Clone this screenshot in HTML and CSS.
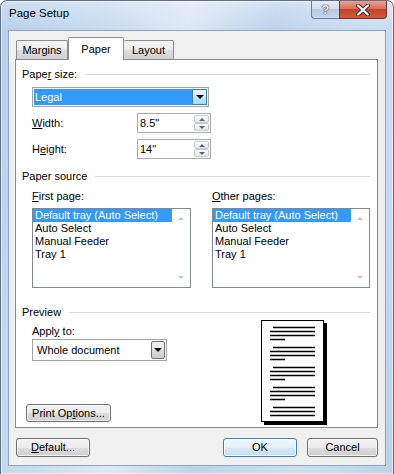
FILE: index.html
```html
<!DOCTYPE html>
<html lang="en">
<head>
  <meta charset="UTF-8" />
  <title>Page Setup</title>
  <link rel="stylesheet" href="styles.css">
</head>
<body>

  <div class="window">
    <div class="titlebar">
      <span class="title">Page Setup</span>
      <div class="caption-buttons">
        <span class="cap-btn help">?</span>
        <span class="cap-btn close">
          <svg width="16" height="12" viewBox="0 0 16 12">
            <path d="M3 1.5 L13 10.5 M13 1.5 L3 10.5" stroke="#3a2a28" stroke-width="4" stroke-linecap="round" />
            <path d="M3 1.5 L13 10.5 M13 1.5 L3 10.5" stroke="#fff" stroke-width="2.2" stroke-linecap="round" />
          </svg>
        </span>
      </div>
    </div>

    <div class="client">
      <div class="tabs">
        <span class="tab tab-margins">Margins</span>
        <span class="tab tab-paper active">Paper</span>
        <span class="tab tab-layout">Layout</span>
      </div>

      <div class="panel">
        <div class="group-title"><span>Pape<u>r</u> size:</span></div>
        <div class="combo combo-legal">
          <span class="combo-text selected">Legal</span>
          <span class="drop drop-focus"></span>
        </div>

        <div class="field-row">
          <label><u>W</u>idth:</label>
          <div class="spin">
            <span class="spin-text">8.5"</span>
            <span class="spin-btns"><span class="sb up"></span><span class="sb down"></span></span>
          </div>
        </div>
        <div class="field-row">
          <label>H<u>e</u>ight:</label>
          <div class="spin">
            <span class="spin-text">14"</span>
            <span class="spin-btns"><span class="sb up"></span><span class="sb down"></span></span>
          </div>
        </div>

        <div class="group-title gap-source"><span>Paper source</span></div>
        <div class="sources">
          <div class="source">
            <label><u>F</u>irst page:</label>
            <div class="listbox">
              <ul class="items">
                <li class="selected">Default tray (Auto Select)</li>
                <li>Auto Select</li>
                <li>Manual Feeder</li>
                <li>Tray 1</li>
              </ul>
              <div class="scrollbar"><span class="arr-up"></span><span class="arr-down"></span></div>
            </div>
          </div>
          <div class="source">
            <label><u>O</u>ther pages:</label>
            <div class="listbox">
              <ul class="items">
                <li class="selected">Default tray (Auto Select)</li>
                <li>Auto Select</li>
                <li>Manual Feeder</li>
                <li>Tray 1</li>
              </ul>
              <div class="scrollbar"><span class="arr-up"></span><span class="arr-down"></span></div>
            </div>
          </div>
        </div>

        <div class="group-title gap-preview"><span>Preview</span></div>
        <div class="preview">
          <div class="preview-left">
            <label class="apply-label">Appl<u>y</u> to:</label>
            <div class="combo combo-apply">
              <span class="combo-text">Whole document</span>
              <span class="drop"></span>
            </div>
            <button class="btn print-btn">Print Op<u>t</u>ions...</button>
          </div>
          <svg class="page" width="66" height="106" viewBox="0 0 66 106">
            <rect x="63" y="3" width="3" height="102" fill="#000" />
            <rect x="3" y="102" width="63" height="3" fill="#000" />
            <rect x="0.5" y="0.5" width="62" height="101" fill="#fff" stroke="#000" />
            <g stroke="#000" stroke-width="1.3">
              <path d="M12 7.5H54M9 11.5H54M9 15.5H54M9 19.5H24" />
              <path d="M12 27.5H54M9 31.5H54M9 35.5H54M9 39.5H24" />
              <path d="M12 47.5H54M9 51.5H54M9 55.5H54M9 59.5H24" />
              <path d="M12 67.5H54M9 71.5H54M9 75.5H54M9 79.5H24" />
              <path d="M12 87.5H54M9 91.5H54M9 95.5H54" />
            </g>
          </svg>
        </div>
      </div>

      <div class="dialog-buttons">
        <button class="btn btn-default"><u>D</u>efault...</button>
        <div class="right-buttons">
          <button class="btn btn-ok">OK</button>
          <button class="btn btn-cancel">Cancel</button>
        </div>
      </div>
    </div>
  </div>

</body>
</html>
```

FILE: styles.css
```css
body {
  margin: 0;
  background: #fff;
  font-family: "Liberation Sans", Arial, sans-serif;
  font-size: 11px;
  color: #000;
  overflow: hidden;
}

.window {
  width: 394px;
  height: 474px;
  box-sizing: border-box;
  border: 1px solid #5f7089;
  border-bottom: none;
  border-radius: 7px 7px 0 0;
  overflow: hidden;
  box-shadow: inset 0 0 0 1px rgba(255, 255, 255, 0.55);
  background:
    linear-gradient(to bottom, rgba(255, 255, 255, 0.3), rgba(255, 255, 255, 0) 28px),
    linear-gradient(100deg, #b9d0ea 0%, #c7daef 22%, #dce8f5 40%, #bed3ec 58%, #cddef1 80%, #bcd2eb 100%);
}

.titlebar {
  height: 29px;
  display: flex;
  justify-content: space-between;
  align-items: flex-start;
}

.title {
  font-size: 11.5px;
  line-height: 13px;
  margin: 6px 0 0 8px;
}

.caption-buttons {
  display: flex;
  margin-right: 6px;
}

.cap-btn {
  height: 18px;
  box-sizing: border-box;
  display: flex;
  align-items: center;
  justify-content: center;
}

.help {
  width: 28px;
  border: 1px solid #6d7e96;
  border-top: none;
  border-right: none;
  border-radius: 0 0 0 4px;
  background: linear-gradient(#e4ecf6 0%, #cfdcec 50%, #b9cbe1 50%, #c8d8eb 100%);
  color: #fff;
  font-weight: bold;
  font-size: 13px;
  text-shadow: 0 0 1px #2d3a4a, 0 0 1px #2d3a4a, 0 0 1px #2d3a4a;
}

.close {
  width: 48px;
  border: 1px solid #6e3428;
  border-top: none;
  border-radius: 0 0 4px 0;
  background: linear-gradient(#e8a493 0%, #d86e58 45%, #c4432b 50%, #d35a3f 100%);
}

.client {
  margin: 0 7px;
  height: 436px;
  box-sizing: border-box;
  border: 1px solid #8ea3bd;
  background: #f0f0f0;
  padding: 6px 7px 0 6px;
}

/* tabs */

.tabs {
  display: flex;
  align-items: flex-end;
  height: 22px;
  padding-left: 1px;
}

.tab {
  height: 19px;
  box-sizing: border-box;
  border: 1px solid #898c95;
  border-bottom: none;
  border-radius: 2px 2px 0 0;
  background: linear-gradient(#f3f3f3 0%, #ebebeb 50%, #dedede 50%, #d0d0d0 100%);
  display: flex;
  align-items: center;
  justify-content: center;
}

.tab-margins { width: 52px; }
.tab-layout { width: 50px; border-left: none; }

.tab.active {
  width: 56px;
  height: 23px;
  margin-bottom: -1px;
  background: #fff;
  position: relative;
  z-index: 1;
  padding-bottom: 1px;
}

.panel {
  height: 369px;
  box-sizing: border-box;
  border: 1px solid #898c95;
  background: #fff;
  padding: 0 7px 0 6px;
}

.group-title {
  display: flex;
  align-items: center;
  gap: 8px;
  line-height: 13px;
  margin-top: 8px;
}

.group-title::after {
  content: "";
  flex: 1;
  border-top: 1px solid #dcdcdc;
}

.gap-source { margin-top: 11px; }
.gap-preview { margin-top: 18px; }

label {
  line-height: 13px;
}

/* combo boxes */

.combo {
  height: 20px;
  box-sizing: border-box;
  border: 1px solid #a4a4a4;
  padding: 1px;
  display: flex;
  background: #fff;
}

.combo-legal {
  width: 177px;
  margin: 6px 0 0 10px;
}

.combo-text {
  flex: 1;
  line-height: 16px;
  padding-left: 1px;
}

.combo-text.selected {
  background: #3399ff;
  color: #fff;
}

.drop {
  width: 15px;
  box-sizing: border-box;
  border: 1px solid #707070;
  border-radius: 2px;
  background: linear-gradient(#f2f2f2 0%, #ebebeb 50%, #dddddd 50%, #cfcfcf 100%);
  display: flex;
  align-items: center;
  justify-content: center;
}

.drop-focus {
  border-color: #3c7fb1;
  border-radius: 0;
  background: linear-gradient(#eaf6fd 0%, #d9f0fc 50%, #bee6fd 50%, #a7d9f5 100%);
}

.drop::after {
  content: "";
  border-left: 4px solid transparent;
  border-right: 4px solid transparent;
  border-top: 4px solid #000;
}

.combo-apply {
  width: 135px;
  height: 22px;
  margin: 1px 0 0 10px;
}

.combo-apply .combo-text {
  line-height: 18px;
  padding-left: 3px;
}

.combo-apply .drop {
  width: 14px;
}

/* width / height spinners */

.field-row {
  display: flex;
  align-items: center;
  margin: 6px 0 0 10px;
}

.field-row label {
  width: 105px;
}

.spin {
  width: 74px;
  height: 20px;
  box-sizing: border-box;
  border: 1px solid #a9abb0;
  display: flex;
}

.spin-text {
  flex: 1;
  line-height: 18px;
  padding-left: 2px;
}

.spin-btns {
  width: 15px;
  display: flex;
  flex-direction: column;
  padding: 1px 1px 1px 0;
}

.sb {
  flex: 1;
  border: 1px solid #c6c9ce;
  border-radius: 2px;
  background: linear-gradient(#fbfbfb, #e6e6e6);
  display: flex;
  align-items: center;
  justify-content: center;
}

.sb.up::after {
  content: "";
  border-left: 3px solid transparent;
  border-right: 3px solid transparent;
  border-bottom: 3px solid #56657d;
}

.sb.down::after {
  content: "";
  border-left: 3px solid transparent;
  border-right: 3px solid transparent;
  border-top: 3px solid #56657d;
}

/* paper source lists */

.sources {
  display: grid;
  grid-template-columns: 159px 158px;
  column-gap: 21px;
  margin: 7px 0 0 10px;
}

.source {
  display: flex;
  flex-direction: column;
}

.listbox {
  margin-top: 5px;
  height: 80px;
  box-sizing: border-box;
  border: 1px solid #828790;
  display: flex;
}

.items {
  flex: 1;
  list-style: none;
  margin: 0;
  padding: 0;
}

.items li {
  line-height: 13px;
  padding-left: 2px;
}

.items li.selected {
  background: #3399ff;
  color: #fff;
}

.scrollbar {
  width: 18px;
  display: flex;
  flex-direction: column;
  justify-content: space-between;
  align-items: center;
  padding: 8px 0 8px;
  box-sizing: border-box;
}

.arr-up {
  border-left: 3px solid transparent;
  border-right: 3px solid transparent;
  border-bottom: 3px solid #c2c2c2;
}

.arr-down {
  border-left: 3px solid transparent;
  border-right: 3px solid transparent;
  border-top: 3px solid #c2c2c2;
}

/* preview */

.preview {
  display: flex;
  height: 108px;
}

.preview-left {
  width: 239px;
  display: flex;
  flex-direction: column;
  align-items: flex-start;
}

.apply-label {
  margin: 6px 0 0 10px;
}

.page {
  margin-top: 1px;
  display: block;
}

/* buttons */

.btn {
  height: 19px;
  box-sizing: border-box;
  border: 1px solid #707070;
  border-radius: 3px;
  background: linear-gradient(#f2f2f2 0%, #ebebeb 50%, #dddddd 50%, #cfcfcf 100%);
  box-shadow: inset 0 0 0 1px rgba(255, 255, 255, 0.7);
  font-family: inherit;
  font-size: 11px;
  color: #000;
  padding: 0;
  line-height: 15px;
}

.print-btn {
  width: 85px;
  height: 18px;
  margin: auto 0 5px 4px;
  line-height: 14px;
}

.dialog-buttons {
  display: flex;
  justify-content: space-between;
  margin-top: 10px;
  padding-left: 1px;
}

.btn-default { width: 74px; }

.right-buttons {
  display: flex;
  gap: 10px;
}

.btn-ok {
  width: 74px;
  border-color: #3c7fb1;
  background: linear-gradient(#f2f8fc 0%, #e4f0f8 50%, #d4e8f4 50%, #c7e0f0 100%);
  box-shadow: inset 0 0 0 1px rgba(255, 255, 255, 0.8);
}

.btn-cancel { width: 71px; }
```
